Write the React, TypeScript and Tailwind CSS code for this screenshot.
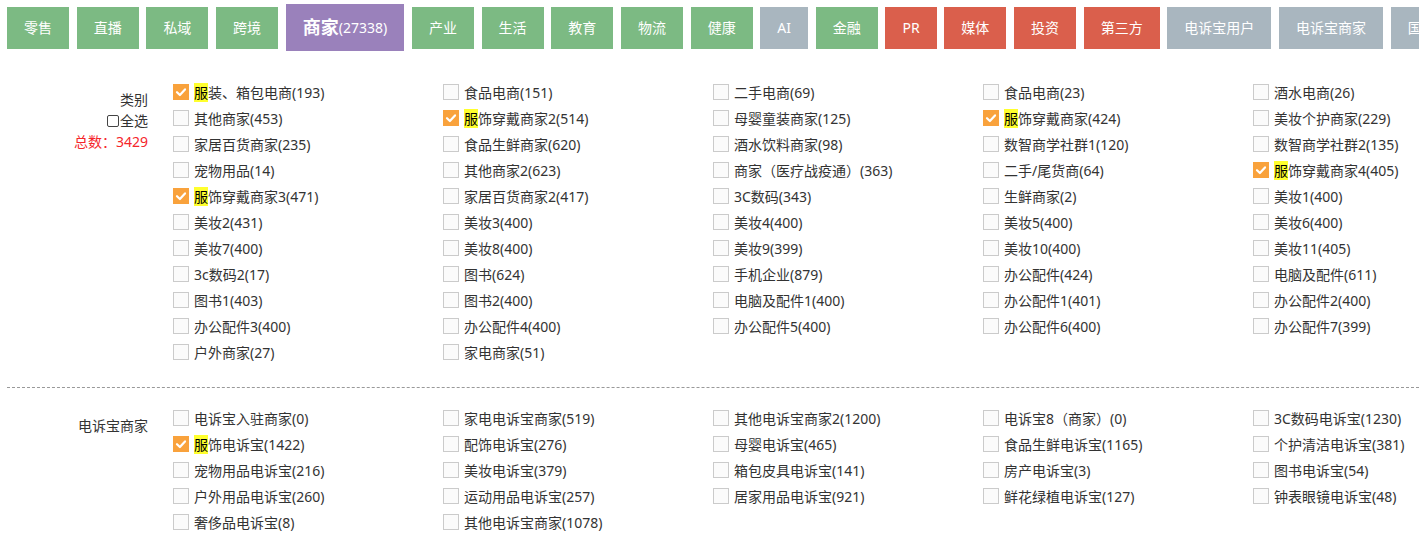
import React from "react";

type Tab = { name: string; color: string; count?: number; active?: boolean };

const tabs: Tab[] = [
  { name: "零售", color: "bg-[#7cba83]" },
  { name: "直播", color: "bg-[#7cba83]" },
  { name: "私域", color: "bg-[#7cba83]" },
  { name: "跨境", color: "bg-[#7cba83]" },
  { name: "商家", color: "bg-[#9a81bb]", count: 27338, active: true },
  { name: "产业", color: "bg-[#7cba83]" },
  { name: "生活", color: "bg-[#7cba83]" },
  { name: "教育", color: "bg-[#7cba83]" },
  { name: "物流", color: "bg-[#7cba83]" },
  { name: "健康", color: "bg-[#7cba83]" },
  { name: "AI", color: "bg-[#a9b6bf]" },
  { name: "金融", color: "bg-[#7cba83]" },
  { name: "PR", color: "bg-[#da5f4c]" },
  { name: "媒体", color: "bg-[#da5f4c]" },
  { name: "投资", color: "bg-[#da5f4c]" },
  { name: "第三方", color: "bg-[#da5f4c]" },
  { name: "电诉宝用户", color: "bg-[#a9b6bf]" },
  { name: "电诉宝商家", color: "bg-[#a9b6bf]" },
  { name: "国际", color: "bg-[#a9b6bf]" },
];

type Item = [string, number, boolean?];

const merchants: Item[] = [
  ["服装、箱包电商", 193, true],
  ["食品电商", 151],
  ["二手电商", 69],
  ["食品电商", 23],
  ["酒水电商", 26],
  ["其他商家", 453],
  ["服饰穿戴商家2", 514, true],
  ["母婴童装商家", 125],
  ["服饰穿戴商家", 424, true],
  ["美妆个护商家", 229],
  ["家居百货商家", 235],
  ["食品生鲜商家", 620],
  ["酒水饮料商家", 98],
  ["数智商学社群1", 120],
  ["数智商学社群2", 135],
  ["宠物用品", 14],
  ["其他商家2", 623],
  ["商家（医疗战疫通）", 363],
  ["二手/尾货商", 64],
  ["服饰穿戴商家4", 405, true],
  ["服饰穿戴商家3", 471, true],
  ["家居百货商家2", 417],
  ["3C数码", 343],
  ["生鲜商家", 2],
  ["美妆1", 400],
  ["美妆2", 431],
  ["美妆3", 400],
  ["美妆4", 400],
  ["美妆5", 400],
  ["美妆6", 400],
  ["美妆7", 400],
  ["美妆8", 400],
  ["美妆9", 399],
  ["美妆10", 400],
  ["美妆11", 405],
  ["3c数码2", 17],
  ["图书", 624],
  ["手机企业", 879],
  ["办公配件", 424],
  ["电脑及配件", 611],
  ["图书1", 403],
  ["图书2", 400],
  ["电脑及配件1", 400],
  ["办公配件1", 401],
  ["办公配件2", 400],
  ["办公配件3", 400],
  ["办公配件4", 400],
  ["办公配件5", 400],
  ["办公配件6", 400],
  ["办公配件7", 399],
  ["户外商家", 27],
  ["家电商家", 51],
];

const complaints: Item[] = [
  ["电诉宝入驻商家", 0],
  ["家电电诉宝商家", 519],
  ["其他电诉宝商家2", 1200],
  ["电诉宝8（商家）", 0],
  ["3C数码电诉宝", 1230],
  ["服饰电诉宝", 1422, true],
  ["配饰电诉宝", 276],
  ["母婴电诉宝", 465],
  ["食品生鲜电诉宝", 1165],
  ["个护清洁电诉宝", 381],
  ["宠物用品电诉宝", 216],
  ["美妆电诉宝", 379],
  ["箱包皮具电诉宝", 141],
  ["房产电诉宝", 3],
  ["图书电诉宝", 54],
  ["户外用品电诉宝", 260],
  ["运动用品电诉宝", 257],
  ["居家用品电诉宝", 921],
  ["鲜花绿植电诉宝", 127],
  ["钟表眼镜电诉宝", 48],
  ["奢侈品电诉宝", 8],
  ["其他电诉宝商家", 1078],
];

function Box({ checked }: { checked?: boolean }) {
  if (checked) {
    return (
      <span className="w-[16px] h-[16px] shrink-0 bg-[#f9a23c] flex items-center justify-center">
        <svg width="12" height="12" viewBox="0 0 12 12">
          <polyline
            points="2,6.2 4.9,9 10,3.4"
            fill="none"
            stroke="#fff"
            strokeWidth="2.2"
            strokeLinecap="round"
            strokeLinejoin="round"
          />
        </svg>
      </span>
    );
  }
  return <span className="w-[16px] h-[16px] shrink-0 border border-[#cbcbcb] bg-[#fbfbfb]" />;
}

function Row({ item }: { item: Item }) {
  const [name, count, checked] = item;
  const mark = checked && name.startsWith("服");
  return (
    <div className="h-[26px] flex items-center gap-[5px] whitespace-nowrap text-[14px] text-[#333]">
      <Box checked={checked} />
      <span>
        {mark ? (
          <>
            <span className="bg-[#ffff2e] text-black">{name[0]}</span>
            {name.slice(1)}
          </>
        ) : (
          name
        )}
        ({count})
      </span>
    </div>
  );
}

export default function App() {
  return (
    <div
      className="w-[1419px] h-[535px] overflow-hidden bg-white"
      style={{ fontFamily: '"Noto Sans", "Noto Sans CJK SC", sans-serif' }}
    >
      <div className="flex items-center gap-[7.7px] pl-[7px] pt-[4px] h-[51px] whitespace-nowrap">
        {tabs.map((t) => (
          <div
            key={t.name}
            className={`${t.color} shrink-0 flex items-center justify-center px-[17px] text-white ${
              t.active ? "h-[47px]" : "h-[42px] text-[14px]"
            }`}
          >
            {t.active ? (
              <>
                <span className="text-[18px] font-bold">{t.name}</span>
                <span className="text-[14px]">({t.count})</span>
              </>
            ) : (
              t.name
            )}
          </div>
        ))}
      </div>

      <div className="ml-[7px] mt-[28px] pb-[22px] border-b border-dashed border-[#999] flex">
        <div className="w-[141px] shrink-0 pt-[10px] text-right text-[14px] leading-[21px] text-[#333]">
          <div>类别</div>
          <div className="flex items-center justify-end gap-[1px]">
            <span className="w-[12px] h-[12px] border border-[#444] rounded-[2px] bg-white" />
            全选
          </div>
          <div className="text-[#f5262b]">总数：3429</div>
        </div>
        <div className="ml-[25px] shrink-0 grid grid-cols-[repeat(5,270px)]">
          {merchants.map((m, i) => (
            <Row key={i} item={m} />
          ))}
        </div>
      </div>

      <div className="ml-[7px] pt-[17px] flex">
        <div className="w-[141px] shrink-0 pt-[10px] text-right text-[14px] leading-[21px] text-[#333]">
          电诉宝商家
        </div>
        <div className="ml-[25px] shrink-0 grid grid-cols-[repeat(5,270px)]">
          {complaints.map((m, i) => (
            <Row key={i} item={m} />
          ))}
        </div>
      </div>
    </div>
  );
}
